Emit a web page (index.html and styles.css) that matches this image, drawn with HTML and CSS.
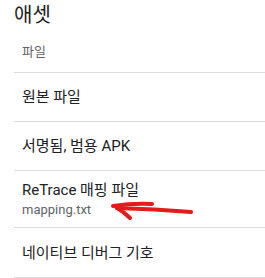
FILE: index.html
```html
<!DOCTYPE html>
<html lang="ko">
<head>
    <meta charset="UTF-8">
    <meta name="viewport" content="width=device-width, initial-scale=1.0">
    <title>애셋</title>
    <link rel="stylesheet" href="styles.css">
</head>
<body>
    <div class="page">
        <h1 class="title">애셋</h1>
        <div class="category">파일</div>
        <ul class="prefs">
            <li class="pref">원본 파일</li>
            <li class="pref">서명됨, 범용 APK</li>
            <li class="pref two-line">
                <span class="pref-title">ReTrace 매핑 파일</span>
                <span class="pref-summary">mapping.txt</span>
                <svg class="arrow" width="95" height="35" viewBox="0 0 95 35">
                    <path d="M8 16 Q28 13 47 14" />
                    <path d="M12 18 Q50 19 86 22" />
                    <path d="M12 18 Q19 22 25 28" />
                </svg>
            </li>
            <li class="pref">네이티브 디버그 기호</li>
        </ul>
    </div>
</body>
</html>
```

FILE: styles.css
```css
* { box-sizing: border-box; margin: 0; padding: 0; }
body { font-family: Roboto, "Noto Sans CJK KR", sans-serif; background: #fff; color: #202124; }

.page { padding-left: 14px; }
.title { font-size: 20px; font-weight: 400; line-height: 28px; padding-top: 1px; }
.category { font-size: 13px; line-height: 20px; color: #5f6368; padding: 13px 0 10px 8px; }

.prefs { list-style: none; }
.pref { display: flex; flex-direction: column; justify-content: center; height: 49px; padding-left: 8px; border-top: 1px solid #dadce0; font-size: 15px; line-height: 20px; }
.pref:last-child { height: 51px; border-bottom: 1px solid #dadce0; }
.two-line { position: relative; height: 57px; padding-top: 1px; }
.pref-summary { font-size: 13px; color: #5f6368; }

.arrow { position: absolute; left: 91px; top: 19px; }
.arrow path { fill: none; stroke: #e41b1b; stroke-width: 4; stroke-linecap: round; }
```
